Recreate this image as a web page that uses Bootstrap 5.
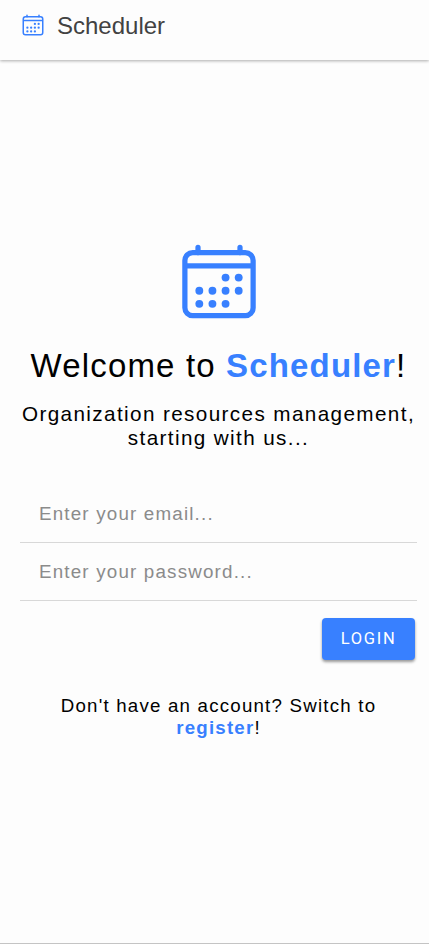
<!DOCTYPE html>
<html lang="en">
<head>
<meta charset="utf-8">
<meta name="viewport" content="width=device-width, initial-scale=1">
<title>Scheduler</title>
<link href="https://cdn.jsdelivr.net/npm/bootstrap@5.3.0/dist/css/bootstrap.min.css" rel="stylesheet">
<style>
body{font-family:"Liberation Sans",Arial,sans-serif;background:#fdfdfd;color:#000;height:944px;border-bottom:1px solid #c4c4c4;overflow:hidden}
.topbar{height:60px;padding:0 0 9px 21px;background:#fdfdfd;box-shadow:0 1px 3px rgba(0,0,0,.32)}
.brand-icon{width:24px;height:24px;margin:-2px 12px 0 0}
.brand-text{font-size:24px;line-height:30px;color:#424242}
.cal{color:#3880ff;fill:none;stroke:currentColor;stroke-width:32}
.hero-icon{width:85px;height:85px;padding-left:1px}
.accent{color:#3880ff;font-weight:700;text-decoration:none}
.welcome{padding:179px 12px 0 20px}
.hero-title{font-size:33px;line-height:40px;letter-spacing:1.16px;margin:22px -20px 0;font-weight:400}
.hero-sub{font-size:20.7px;line-height:24px;letter-spacing:1.38px;margin:16px -10px 35px}
.field{height:58px;font-size:18.8px;letter-spacing:1.18px;padding:0 0 0 19px;border:0;border-bottom:1px solid #d8d8d8;border-radius:0;background:transparent}
.field:focus{box-shadow:none;background:transparent}
.field::placeholder{color:#8b8b8b;opacity:1}
.login{width:93px;height:42px;margin:17px 2px 0 0;padding:0 0 1px;background:#3880ff;color:#fff;border:0;border-radius:4px;font:400 16.5px/24px Roboto,sans-serif;letter-spacing:1.7px;box-shadow:0 2px 3px rgba(0,0,0,.4)}
.switch{font-size:18.7px;line-height:22px;letter-spacing:1.21px;margin:35px 30px 0}
</style>
</head>
<body>
<svg class="d-none"><symbol id="calendar" viewBox="0 0 512 512">
<rect x="48" y="80" width="416" height="384" rx="48" stroke-linejoin="round"/>
<path d="M128 48v32M384 48v32" stroke-linecap="round"/><path d="M464 160H48"/>
<g fill="currentColor" stroke="none"><circle cx="296" cy="232" r="24"/><circle cx="376" cy="232" r="24"/><circle cx="136" cy="312" r="24"/><circle cx="216" cy="312" r="24"/><circle cx="296" cy="312" r="24"/><circle cx="376" cy="312" r="24"/><circle cx="136" cy="392" r="24"/><circle cx="216" cy="392" r="24"/><circle cx="296" cy="392" r="24"/></g>
</symbol></svg>
<header class="topbar d-flex align-items-center">
<svg class="cal brand-icon"><use href="#calendar"/></svg>
<span class="brand-text">Scheduler</span>
</header>
<main class="welcome text-center">
<svg class="cal hero-icon d-block mx-auto"><use href="#calendar"/></svg>
<h1 class="hero-title text-nowrap">Welcome to <span class="accent">Scheduler</span>!</h1>
<p class="hero-sub">Organization resources management,<br>starting with us...</p>
<form>
<input class="form-control field" type="email" placeholder="Enter your email...">
<input class="form-control field" type="password" placeholder="Enter your password...">
<div class="d-flex justify-content-end"><button type="button" class="btn login">LOGIN</button></div>
</form>
<p class="switch">Don't have an account? Switch to <a class="accent" href="#">register</a>!</p>
</main>
<script src="https://cdn.jsdelivr.net/npm/bootstrap@5.3.0/dist/js/bootstrap.bundle.min.js"></script>
</body>
</html>
